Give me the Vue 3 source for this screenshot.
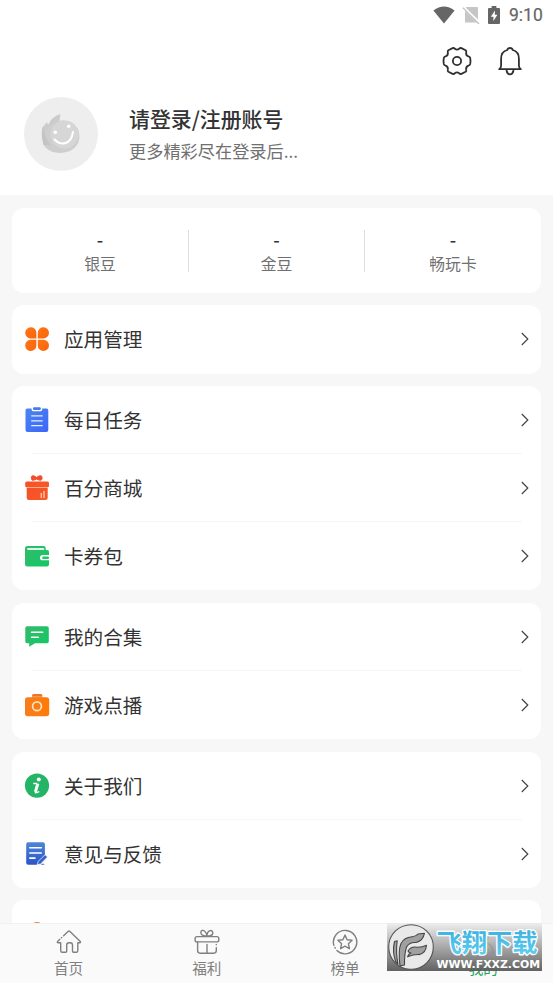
<script setup>
const stats = ['银豆', '金豆', '畅玩卡']
const groups = [
  [{ icon: 'apps', label: '应用管理' }],
  [
    { icon: 'task', label: '每日任务' },
    { icon: 'mall', label: '百分商城' },
    { icon: 'wallet', label: '卡券包' }
  ],
  [
    { icon: 'chat', label: '我的合集' },
    { icon: 'camera', label: '游戏点播' }
  ],
  [
    { icon: 'info', label: '关于我们' },
    { icon: 'note', label: '意见与反馈' }
  ]
]
const tabs = [
  { icon: 'home', label: '首页' },
  { icon: 'gift', label: '福利' },
  { icon: 'rank', label: '榜单' },
  { icon: 'me', label: '我的', active: true }
]
</script>

<template>
  <div class="page">
    <svg class="sprite" width="0" height="0" aria-hidden="true">
      <defs>
        <linearGradient id="gOrange" x1="0" y1="0" x2="1" y2="1"><stop stop-color="#ff7614" /><stop offset="1" stop-color="#f9650c" /></linearGradient>
        <linearGradient id="gBlue" x1="0" y1="0" x2="1" y2="1"><stop stop-color="#4c86ee" /><stop offset="1" stop-color="#3b65fa" /></linearGradient>
        <linearGradient id="gRed" x1="0" y1="0" x2="1" y2="1"><stop stop-color="#f4502c" /><stop offset="1" stop-color="#fa5a20" /></linearGradient>
        <linearGradient id="gGreen" x1="0" y1="0" x2="1" y2="1"><stop stop-color="#35b96c" /><stop offset="1" stop-color="#12c966" /></linearGradient>
        <linearGradient id="gCam" x1="0" y1="0" x2="1" y2="0"><stop stop-color="#f87d1c" /><stop offset="1" stop-color="#ff7b08" /></linearGradient>
        <linearGradient id="gNote" x1="0" y1="0" x2="0" y2="1"><stop stop-color="#4b86d8" /><stop offset="1" stop-color="#2c54c8" /></linearGradient>
        <linearGradient id="gWord" x1="0" y1="0" x2="0" y2="1"><stop stop-color="#35a9dc" /><stop offset="1" stop-color="#62d3f3" /></linearGradient>
      </defs>
      <symbol id="i-apps" viewBox="0 0 26 26">
        <g fill="url(#gOrange)">
          <path d="M12.4 12.4H6.6A5.6 5.6 0 1 1 12.4 6.5Z" />
          <path d="M13.8 12.4h5.6A5.6 5.6 0 1 0 13.8 6.5Z" />
          <path d="M12.4 13.8H6.6A5.6 5.6 0 1 0 12.4 19.4Z" />
          <path d="M13.8 13.8h5.6A5.6 5.6 0 1 1 13.8 19.4Z" />
        </g>
      </symbol>
      <symbol id="i-task" viewBox="0 0 26 26">
        <path fill="url(#gBlue)" d="M3.2 1.5h4.4v1.1q0 1.6 1.6 1.6h7.4q1.6 0 1.6-1.6V1.5h4.2q1.9 0 1.9 1.9v19.5q0 2-2 2H3.5q-2 0-2-2V3.4q0-1.9 1.7-1.9Z" />
        <rect x="9" y="0.2" width="7.8" height="2.8" rx="1" fill="#437bea" />
        <path d="M7.2 8.8h11.5M7.2 13.8h11.5M7.2 18.7h11.5" stroke="#e4edff" stroke-width="1.2" />
      </symbol>
      <symbol id="i-mall" viewBox="0 0 26 26">
        <path d="M12.6 2.5C10.9.8 8 .2 7.5 1.5s0 3.7 1.2 3.8c1.5.1 2.8-.9 3.9-1.2 1.4.5 2.7 1.3 4 1.2 1.4-.1 1.8-2.5 1.3-3.8-.6-1.4-3.7-.6-5.3 1Z" fill="#f24c2c" stroke="#f24c2c" />
        <rect x="1.2" y="6.4" width="23.8" height="6" rx="1.6" fill="url(#gRed)" />
        <path d="M2.7 13.1h21v9.7q0 2.2-2.2 2.2H4.9q-2.2 0-2.2-2.2Z" fill="url(#gRed)" />
        <path d="M17.2 18v5.1M20 16v7.1" stroke="#ffe4da" stroke-width="1.1" />
      </symbol>
      <symbol id="i-wallet" viewBox="0 0 26 26">
        <path d="M3.5 3h16.2q2 0 2 2v2.1h1.6q1.7 0 1.7 1.6v3.4h-6.4q-2.6 0-2.6 2.6t2.6 2.6H25v4.2q0 2-2 2H3.5q-2.5 0-2.5-2.5V5.5Q1 3 3.5 3Z" fill="url(#gGreen)" />
        <path d="M4 6.1h15.3" stroke="#d9f7e6" stroke-width="2" stroke-linecap="round" />
        <rect x="18.2" y="13.6" width="6.8" height="2.4" rx="1" fill="#26c36b" />
      </symbol>
      <symbol id="i-chat" viewBox="0 0 26 26">
        <path d="M3.2 2.2h19.7q1.9 0 1.9 1.9v13.4q0 1.8-1.9 1.8H11l-5.8 3.4v-3.4h-2q-1.9 0-1.9-1.8V4.1q0-1.9 1.9-1.9Z" fill="url(#gGreen)" />
        <path d="M7.5 8.2h11.2M7.5 13.3h6.8" stroke="#fff" stroke-width="1.5" stroke-linecap="round" />
      </symbol>
      <symbol id="i-camera" viewBox="0 0 26 26">
        <rect x="8" y="2" width="10.4" height="5" rx="1.5" fill="#ef7520" />
        <path d="M7 5.1h12" stroke="#fff" stroke-width=".6" />
        <rect x="1" y="5.3" width="24.2" height="18.9" rx="2.7" fill="url(#gCam)" />
        <circle cx="13" cy="14.3" r="4.4" fill="none" stroke="#ffe3bd" stroke-width="1.7" />
      </symbol>
      <symbol id="i-info" viewBox="0 0 26 26">
        <circle cx="13" cy="12.6" r="12.1" fill="#24b465" />
        <circle cx="14.8" cy="6.6" r="2" fill="#fff" />
        <path d="M9.3 10.6h3.8M10.8 19.6q2.2.5 4.4-1.1" fill="none" stroke="#fff" stroke-width="1.5" />
        <path d="M13.8 10.6l-2.4 8.2" fill="none" stroke="#fff" stroke-width="3" />
      </symbol>
      <symbol id="i-note" viewBox="0 0 26 26">
        <path d="M4.2 1.3h14.7q2 0 2 2v11.3l-8.2 9.1H4.2q-2 0-2-2V3.3q0-2 2-2Z" fill="url(#gNote)" />
        <path d="M5.8 6.7h11.5M5.8 12h11.5M5.8 17.1h5.2" stroke="#fff" stroke-width="1.6" stroke-linecap="round" />
        <path d="M13.4 23.8l.7-3.4 7-6.6 2.4 2.3-6.8 6.8Z" fill="#3562cc" stroke="#fff" stroke-width=".7" />
        <path d="M17.2 23.3h3.1" stroke="#5577ce" />
      </symbol>
      <symbol id="i-home" viewBox="0 0 28 28">
        <path d="M8.6 7.8l4.7-4.5q.7-.6 1.4 0l10.6 10.2q.7 1.1-.7 1.2h-1.8v8q0 1.6-1.6 1.6h-2.7q-1 0-1-1v-6.2q0-2.4-2.4-2.4h-1q-2.4 0-2.4 2.4v6.2q0 1-1 1H7.4q-1.7 0-1.7-1.6v-8H3.3q-1.6-.1-.7-1.3l2.2-2.1M6.5 9.7l.3-.3" />
      </symbol>
      <symbol id="i-gift" viewBox="0 0 28 28">
        <rect x="2.1" y="8.6" width="23.7" height="5.3" rx="2" />
        <path d="M4.6 14v8.6q0 2.6 2.6 2.6h13.5q2.6 0 2.6-2.6v-3M23.3 16.4v.4M14 16.5v8.6M14 8C13.6 4.3 11 1.9 9 2.5S7.6 7 10.2 7.5Q12.3 8.2 14 8Q13.6 4.3 17 2.6c2.8-.9 4.1 3.9.8 4.9Q15.7 8.2 14 8" />
      </symbol>
      <symbol id="i-rank" viewBox="0 0 28 28">
        <path d="M2.8 17.3A11.7 11.7 0 1 1 5.9 22.5M4 19.5l.3.6" />
        <path d="M14 7.1l2.1 4.6 5 .6-3.7 3.4 1 5-4.4-2.5-4.4 2.5 1-5L6.9 12.3l5-.6Z" />
      </symbol>
      <symbol id="i-me" viewBox="0 0 28 28">
        <circle cx="14" cy="8" r="5.6" />
        <path d="M3.8 25Q4.5 14.5 14 14.5T24.2 25" />
      </symbol>
    </svg>

    <header class="top">
      <div class="status">
        <svg class="wifi" viewBox="0 0 22 18"><path d="M.4 4.5Q11-3.5 21.6 4.5L11 17.5Z" /></svg>
        <svg class="sim" viewBox="0 0 18 18"><path d="M4 1h11q1 0 1 1v14.5H3V6Z" fill="#c6c6c6" /><path d="M1 1l16.5 16" stroke="#fff" stroke-width="2.8" /><path d="M.8 1.7L17 18" stroke="#bebebe" stroke-width="1.2" /></svg>
        <svg class="battery" viewBox="0 0 12 18"><path d="M3.6 0h4.8v2H11q1 0 1 1v14q0 1-1 1H1q-1 0-1-1V3q0-1 1-1h2.6Z" fill="#666" /><path d="M7 4.5L2.8 10.8h2.6v4.2l4-6.2H6.8Z" fill="#fff" /></svg>
        <span class="clock">9:10</span>
      </div>
      <div class="actions">
        <svg viewBox="0 0 30 30"><path d="M10.6 2.1Q12 1.7 12.8 2.8q2.2 1.7 4.4 0 .8-1.1 2.2-.7l4.2 2.2q1 .8.6 2-.6 3.1 2.2 4.1 1.4.2 1.8 1.6.6 3 0 6-.4 1.4-1.8 1.6-2.8 1-2.2 4.1.4 1.2-.6 2l-4.2 2.2q-1.4.4-2.2-.7-2.2-1.7-4.4 0-.8 1.1-2.2.7l-4.2-2.2q-1-.8-.6-2 .6-3.1-2.2-4.1-1.4-.2-1.8-1.6-.6-3 0-6 .4-1.4 1.8-1.6 2.8-1 2.2-4.1-.4-1.2.6-2Z" /><circle cx="15" cy="15" r="4.1" /></svg>
        <svg viewBox="0 0 30 30"><path d="M4.2 23.2q1.9-1.3 1.9-3.7v-6.8C6.1 8 8.8 4.9 12.3 4 13 1.3 17 1.3 17.7 4c3.5.9 6.2 4 6.2 8.7v6.8q0 2.4 1.9 3.7Z" /><path d="M11.6 24.7q.8 3.6 3.4 3.6t3.4-3.6" /></svg>
      </div>
      <div class="profile">
        <svg class="avatar" viewBox="0 0 74 74">
          <circle cx="37" cy="37" r="37" fill="#eee" />
          <path d="M18 31L23 25l1 3Q28 19 36.5 17.2L35 26 23 48Q18 39 18 31Z" fill="#cbcbcb" />
          <path d="M19 47Q18 33 31 25q15-5 23 7 5 15-8 22-15 5-24-3l-4-5Z" fill="#cecece" />
          <path d="M19 30q2 12 8 18L20 48q-4-9-1-18Z" fill="#c4c4c4" />
          <circle cx="40.5" cy="37.5" r="14" fill="#d6d6d6" />
          <path d="M30.5 42.5q5 5.3 11 3.5t7.5-11" fill="none" stroke="#fff" stroke-width="2" stroke-linecap="round" />
          <circle cx="31.3" cy="35.3" r="1.8" fill="#fff" /><circle cx="44.7" cy="29.3" r="1.8" fill="#fff" />
        </svg>
        <div><h1>请登录/注册账号</h1><p>更多精彩尽在登录后...</p></div>
      </div>
    </header>

    <main>
      <section class="card stats">
        <div v-for="s in stats" :key="s" class="stat"><b>-</b><span>{{ s }}</span></div>
      </section>
      <section v-for="(g, i) in groups" :key="i" class="card">
        <div v-for="item in g" :key="item.icon" class="row">
          <svg class="icon"><use :href="'#i-' + item.icon" /></svg>
          <span>{{ item.label }}</span>
          <svg class="arrow" viewBox="0 0 8 14"><path d="M.8 1l6 6-6 6" /></svg>
        </div>
      </section>
      <section class="card next"><i class="dot"></i></section>
    </main>

    <nav>
      <div v-for="t in tabs" :key="t.icon" :class="['tab', { active: t.active }]">
        <svg><use :href="'#i-' + t.icon" /></svg><span>{{ t.label }}</span>
      </div>
    </nav>

    <div class="mark">
      <svg viewBox="0 0 155 48">
        <circle cx="24" cy="24" r="22.3" fill="#e9e9e9" stroke="#555" stroke-width="1.1" />
        <g fill="#a0a0a0" stroke="#454545" stroke-width="1.1" stroke-linejoin="round">
          <path d="M8.8 39Q5 29 7.5 18.5l2.7-.8Q8.6 30 11 41Z" />
          <path d="M13 43Q11 27 14 20.5q3-6 11-6.7 4-.3 6-2.8l6.5-.8q-1.5 7.8-8.5 9.3-7-.5-9.6 4.8Q17.3 31 17.5 42Z" />
          <path d="M21 28q3-5 9-3.7 5 .2 9.5-2-.8 8.5-7.5 9.3-5-.3-11.5 2.2.8-2.8 3.5-3.7-2-.2-3-2.1Z" />
        </g>
        <text class="name" x="49.5" y="29" textLength="101" lengthAdjust="spacingAndGlyphs">飞翔下载</text>
        <text class="site" x="49.5" y="44.6" textLength="103.5" lengthAdjust="spacingAndGlyphs">WWW.FXXZ.COM</text>
      </svg>
    </div>
  </div>
</template>

<style>
body { margin: 0; overflow: hidden; }
</style>
<style scoped>
* { box-sizing: border-box; }
.page { position: relative; width: 553px; height: 983px; overflow: hidden; display: flex; flex-direction: column; background: #f7f7f7; font-family: "Noto Sans CJK SC", "Noto Sans", sans-serif; color: #333; }
.sprite { position: absolute; }
svg { display: block; flex: none; }
.top { height: 195px; flex: none; background: #fff; }
.status { height: 31px; padding: 0 9px 1px 0; display: flex; align-items: center; justify-content: flex-end; }
.wifi { width: 22px; height: 18px; fill: #666; margin-right: 7px; }
.sim { width: 18px; height: 18px; margin-right: 8px; }
.battery { width: 12px; height: 18px; margin-right: 9px; }
.clock { font: 400 17.5px/20px Roboto, sans-serif; color: #666; width: 35px; white-space: nowrap; -webkit-text-stroke: .2px #666; }
.actions { height: 60px; padding: 0 28px 0 0; display: flex; align-items: center; justify-content: flex-end; gap: 23px; }
.actions svg { width: 30px; height: 30px; fill: none; stroke: #303030; stroke-width: 1.8; stroke-linejoin: round; stroke-linecap: round; }
.profile { margin: 6px 0 0 24px; display: flex; }
.avatar { width: 74px; height: 74px; margin-right: 31px; }
h1 { margin: 6px 0 0; font-size: 20.9px; line-height: 30px; font-weight: 500; }
p { margin: 5px 0 0; font-size: 17.2px; line-height: 26px; color: #707070; }
main { flex: 1; padding: 13px 12px 0; display: flex; flex-direction: column; gap: 12.35px; min-height: 0; overflow: hidden; }
.card { flex: none; background: #fff; border-radius: 12px; }
.stats { height: 85px; display: grid; grid-template-columns: 177px 176px 176px; align-items: center; }
.stat { height: 42px; display: flex; flex-direction: column; align-items: center; border-right: 1px solid #dedede; }
.stat:last-child { border: 0; }
.stat b { font-size: 18px; line-height: 20px; font-weight: 500; margin-top: -1px; }
.stat span { font-size: 15.8px; line-height: 24px; color: #707070; margin-top: 3px; }
.row { position: relative; height: 68.2px; padding: 0 12px; display: flex; align-items: center; }
.row + .row::before { content: ""; position: absolute; left: 19px; right: 19px; top: -1px; height: 1px; background: #f6f6f6; }
.icon { width: 26px; height: 26px; margin-right: 14px; }
.row span { flex: 1; font-size: 19.6px; line-height: 28px; }
.arrow { width: 8px; height: 14px; fill: none; stroke: #444; stroke-width: 1.2; }
.next { height: 80px; padding: 21.5px 18px; }
.dot { display: block; width: 14px; height: 14px; border-radius: 50%; background: #ef8144; }
nav { height: 60px; flex: none; display: grid; grid-template-columns: repeat(4, 1fr); background: #fafafa; border-top: 1px solid #f1f1f1; }
.tab { display: flex; flex-direction: column; align-items: center; padding: 4px 1px 0 0; color: #808080; }
.tab svg { width: 28px; height: 28px; fill: none; stroke: currentColor; stroke-width: 1.4; stroke-linejoin: round; stroke-linecap: round; }
.tab span { font-size: 14.6px; line-height: 20px; margin-top: 2px; }
.tab.active { color: #24a45b; }
.mark { position: absolute; left: 387px; top: 923px; width: 155px; height: 48px; background: linear-gradient(rgba(235, 235, 235, .8), rgba(160, 160, 160, .9) 50%, rgba(88, 88, 88, .94)); }
.mark svg { width: 155px; height: 48px; }
.name { font-size: 25px; font-weight: 700; fill: url(#gWord); stroke: #fff; stroke-width: 2.6px; paint-order: stroke fill; stroke-linejoin: round; }
.site { font: 700 10.5px "DejaVu Sans", sans-serif; fill: #fff; }
</style>
